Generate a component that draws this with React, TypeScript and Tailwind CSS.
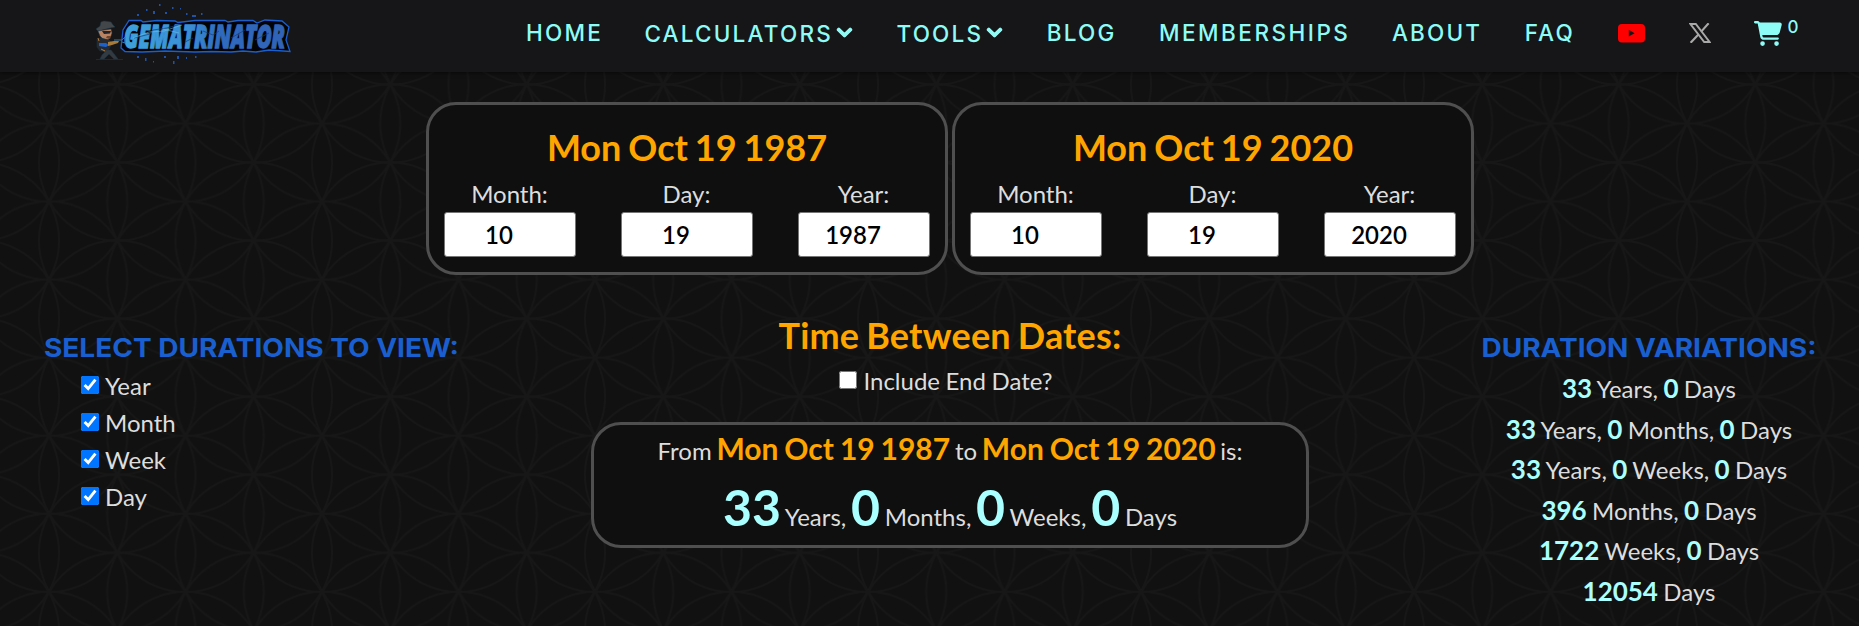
import React, { useState } from "react";
import { FaChevronDown } from "react-icons/fa";
import { FaCartShopping } from "react-icons/fa6";

interface DateParts {
  title: string;
  month: string;
  day: string;
  year: string;
}

const dates: DateParts[] = [
  { title: "Mon Oct 19 1987", month: "10", day: "19", year: "1987" },
  { title: "Mon Oct 19 2020", month: "10", day: "19", year: "2020" },
];

const variations: [string, string][][] = [
  [["33", "Years,"], ["0", "Days"]],
  [["33", "Years,"], ["0", "Months,"], ["0", "Days"]],
  [["33", "Years,"], ["0", "Weeks,"], ["0", "Days"]],
  [["396", "Months,"], ["0", "Days"]],
  [["1722", "Weeks,"], ["0", "Days"]],
  [["12054", "Days"]],
];

// Specks floating over and under the logo: x, y, width, height
const specks = [
  [17, 14, 2, 2], [26, 9, 1.5, 2], [39, 4, 1.5, 2], [33, 11, 2, 3], [45, 12, 2, 2],
  [52, 7, 1.5, 2], [60, 8, 1, 1.5], [66, 13, 1.5, 2], [72, 15, 4, 2], [81, 13, 1.5, 2],
  [17, 56, 2, 2], [25, 58, 1.5, 3], [33, 61, 1, 1.5], [44, 56, 2, 2], [53, 61, 1.5, 3],
  [57, 56, 2, 3], [66, 57, 1, 2], [75, 56, 1.5, 2],
];

const Flowers: React.FC = () => (
  <svg className="absolute inset-0 w-full h-full pointer-events-none" aria-hidden="true">
    <defs>
      <pattern id="flower" width="136.5" height="78.06" patternUnits="userSpaceOnUse" patternTransform="translate(49 123.5)">
        <g fill="none" stroke="#171717" strokeWidth="1.8">
          {[-1, 0, 1, 2].map((row) =>
            [-1, 0, 1, 2].map((col) => (
              <circle key={`${row}-${col}`} cx={col * 136.5} cy={row * 78.06} r="78.3" />
            ))
          )}
          {[-1, 0, 1, 2].map((row) =>
            [-1, 0, 1].map((col) => (
              <circle key={`${row}-${col}`} cx={col * 136.5 + 68.25} cy={row * 78.06 - 39.03} r="78.3" />
            ))
          )}
        </g>
      </pattern>
    </defs>
    <rect width="100%" height="100%" fill="url(#flower)" />
  </svg>
);

const Logo: React.FC = () => (
  <svg className="w-[200px] h-[66px] shrink-0 overflow-visible" viewBox="0 0 200 66" aria-label="Gematrinator">
    <defs>
      <linearGradient id="logo-text" x1="0" x2="1">
        <stop offset="0" stopColor="#3ea2dc" />
        <stop offset="0.4" stopColor="#3a8fd6" />
        <stop offset="0.6" stopColor="#2f6abf" />
        <stop offset="1" stopColor="#3163b6" />
      </linearGradient>
    </defs>
    {specks.map(([x, y, w, h], i) => (
      <rect key={i} x={x + 25} y={y} width={w} height={h} fill="#2052a8" />
    ))}
    <path
      d="M34 20.5 46 20.5 48 22 62 20.5 80 21 83 22.5 100 20.5 130 20.5 133 22 143 20.5 158 20.5 162 23 170 20 187 21 194 27 191 40 195 51.5 174 50 161 52 148 51 136 52 117 51.5 100 52 70 51 47 52 30 51.5 26 48 28 30Z"
      fill="#020306"
      stroke="#1a5fd0"
      strokeWidth="1.3"
    />
    <text x="29" y="47.5" textLength="161" lengthAdjust="spacingAndGlyphs" fill="url(#logo-text)" stroke="url(#logo-text)" strokeWidth="1.3" className="font-['Open_Sans',sans-serif] font-extrabold italic text-[31px] leading-none">
      GEMATRINATOR
    </text>
    <path d="M39 38 55 34 58 30 72 28 86 24M108 31 118 35 124 31M136 38 150 30M160 40 174 33M90 42 98 38" fill="none" stroke="#173b72" strokeWidth="0.7" />
    <path d="M38 38 54 32 69 31 87 25M68 29 84 33" fill="none" stroke="#72c1ea" strokeWidth="0.8" opacity="0.7" />
    {/* Gunman */}
    <g stroke="#16384a" strokeWidth="0.5">
      <path d="M1 29 5 26 6 22 9 21 16 22 18 25 20 27 15 28 3 31Z" fill="#44474a" />
      <path d="M3 31 16 29 17 33 16 36 13 40 8 39 5 36Z" fill="#b98362" />
      <path d="M2 39 6 38 14 40 17 43 13 51H5L2 47Z" fill="#262a30" />
      <path d="M6 50 10 52 7 55 5 59H9L14 54 19 59H23L16 50Z" fill="#353a40" />
    </g>
    <path d="M7 31H12L16 31 15 33.5 9 34Z" fill="#20242c" />
    <path d="M12 36H16L15 39 11 38Z" fill="#6e4630" />
    <path d="M4 43 11 43 14 45 11 47 4 46Z" fill="#1c62cf" />
    <path d="M13 42 19 41 24 41 23 43 17 45 13 46Z" fill="#a77a3a" />
    <path d="M19 40H27L30 37V43L27 42" fill="none" stroke="#2d78b0" />
    <path d="M3 38 4 41M6 49 10 51" fill="none" stroke="#b77731" />
    <path d="M1 59.5H28" stroke="#183052" strokeWidth="0.8" />
  </svg>
);

const YoutubeIcon: React.FC = () => (
  <svg className="w-[27px] h-[19px]" viewBox="0 0 27 19">
    <rect width="27" height="18.5" rx="4" fill="#ff0000" />
    <path d="M10.8 5.8 16.6 9.2 10.8 12.6Z" fill="#161618" />
  </svg>
);

const XIcon: React.FC = () => (
  <svg className="w-[22px] h-[20px]" viewBox="0 0 22 20" fill="none" stroke="#a8a8a8">
    <path d="M1.4 1H6.8L20.6 19H15.2Z" strokeWidth="2" />
    <path d="M19.6 .2 12.2 8.6M9.4 11.5 1.6 19.8" strokeWidth="2.1" />
  </svg>
);

const DateCard: React.FC<{ date: DateParts }> = ({ date }) => (
  <div className="w-[522px] h-[173px] rounded-[30px] border-3 border-[#4f4f4f] bg-[#0f0f0f] px-[15px] pt-[19px]">
    <h2 className="text-center text-[36px] leading-[46px] font-bold text-[#ffa500] [word-spacing:-1.8px]">{date.title}</h2>
    <div className="flex justify-between mt-[8px]">
      {[["Month:", date.month], ["Day:", date.day], ["Year:", date.year]].map(([label, value]) => (
        <label key={label} className="block w-[132px] text-center">
          <span className="block h-[34px] leading-[32px] pr-[1px]">{label}</span>
          <input
            defaultValue={value}
            className="block w-[132px] h-[45px] pl-[2px] pr-[24px] rounded-[3px] border border-[#767676] bg-white text-center text-[24px] font-semibold text-black"
          />
        </label>
      ))}
    </div>
  </div>
);

const Check: React.FC<{ label: string; initial?: boolean }> = ({ label, initial = false }) => {
  const [checked, setChecked] = useState(initial);
  return (
    <label className="flex items-center h-[37px] gap-[6px] [word-spacing:-0.6px]">
      <input type="checkbox" checked={checked} onChange={() => setChecked(!checked)} className="w-[18px] h-[18px] -mt-[2px]" />
      <span>{label}</span>
    </label>
  );
};

const Dropdown: React.FC<{ label: string }> = ({ label }) => (
  <a className="flex items-center pt-[1px] mr-[2px]">
    {label}
    <FaChevronDown className="w-[17px] h-[17px] ml-[3px] -mt-[2px] stroke-current stroke-[36px]" />
  </a>
);

export default function App() {
  return (
    <div className="relative w-[1859px] h-[626px] overflow-hidden bg-[#111111] font-['Lato',sans-serif] text-[24px] text-[#dddddd]">
      <Flowers />
      <header className="relative flex items-start h-[72px] bg-[#161618] pl-[95px] shadow-[0_1px_4px_rgba(0,0,0,0.5)]">
        <Logo />
        <nav className="flex items-center h-[66px] ml-[231px] gap-[41.5px] font-['Inter',sans-serif] text-[22.5px] font-medium tracking-[2.2px] text-[#8efcf6]">
          <a>HOME</a>
          <Dropdown label="CALCULATORS" />
          <Dropdown label="TOOLS" />
          <a className="mr-[1px]">BLOG</a>
          <a className="tracking-[2.5px]">MEMBERSHIPS</a>
          <a className="mr-[1px]">ABOUT</a>
          <a className="mr-[1px]">FAQ</a>
          <a className="ml-[1px]"><YoutubeIcon /></a>
          <a className="ml-[2px]"><XIcon /></a>
          <a className="flex items-start ml-[2px]">
            <FaCartShopping className="w-[28px] h-[25px]" />
            <span className="ml-[5px] -mt-[2px] text-[17px] leading-[17px] tracking-normal">0</span>
          </a>
        </nav>
      </header>

      <section className="relative flex justify-center gap-[4px] mt-[30px] ml-[41px]">
        {dates.map((date) => <DateCard key={date.title} date={date} />)}
      </section>

      <main className="relative flex pl-[44px] mt-[37px]">
        <aside className="w-[420px] shrink-0 pt-[19px]">
          <h3 className="h-[34px] font-['Inter',sans-serif] text-[26px] leading-[34px] font-bold text-[#1a5fd0] whitespace-nowrap origin-left scale-x-[1.077]">SELECT DURATIONS TO VIEW:</h3>
          <div className="pl-[37px] pt-[2px]">
            {["Year", "Month", "Week", "Day"].map((unit) => <Check key={unit} label={unit} initial />)}
          </div>
        </aside>

        <section className="flex flex-col items-center w-[718px] shrink-0 ml-[127px]">
          <h2 className="mb-[4px] text-[36px] leading-[46px] font-bold text-[#ffa500] tracking-[0.2px] [word-spacing:-2px]">Time Between Dates:</h2>
          <div className="pr-[8px]">
            <Check label="Include End Date?" />
          </div>
          <div className="w-[718px] h-[126px] mt-[23px] rounded-[30px] border-3 border-[#4f4f4f] bg-[#0f0f0f] text-center [word-spacing:-1.4px]">
            <p className="h-[50px] leading-[47px]">
              From <b className="text-[30px] text-[#ffa500]">Mon Oct 19 1987</b> to <b className="text-[30px] text-[#ffa500]">Mon Oct 19 2020</b> is:
            </p>
            <p className="h-[66px] leading-[64px]">
              {[["33", "Years, "], ["0", "Months, "], ["0", "Weeks, "], ["0", "Days"]].map(([n, unit]) => (
                <React.Fragment key={unit}><b className="text-[50px] text-[#aaffff]">{n}</b> {unit}</React.Fragment>
              ))}
            </p>
          </div>
        </section>

        <aside className="w-[336px] shrink-0 ml-[172px] pt-[19px] text-center">
          <h3 className="h-[34px] mb-[3px] font-['Inter',sans-serif] text-[26px] leading-[34px] font-bold text-[#1a5fd0] whitespace-nowrap scale-x-[1.077]">DURATION VARIATIONS:</h3>
          {variations.map((parts, i) => (
            <p key={i} className="h-[40.6px] leading-[40.6px] whitespace-nowrap [word-spacing:-0.8px]">
              {parts.map(([n, unit], j) => (
                <React.Fragment key={j}>{j > 0 && " "}<b className="text-[26px] text-[#aaffff]">{n}</b> {unit}</React.Fragment>
              ))}
            </p>
          ))}
        </aside>
      </main>
    </div>
  );
}
